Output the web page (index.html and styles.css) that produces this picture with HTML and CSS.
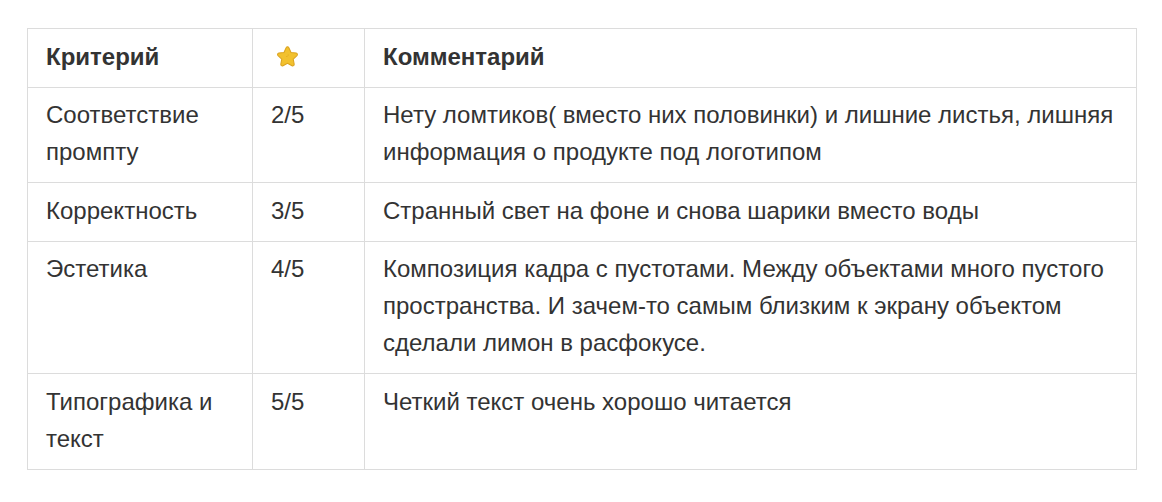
FILE: index.html
```html
<!DOCTYPE html>
<html lang="ru">
<head>
<meta charset="utf-8">
<link rel="stylesheet" href="styles.css">
</head>
<body>
<table class="grid">
  <colgroup>
    <col class="c1"><col class="c2"><col class="c3">
  </colgroup>
  <thead>
    <tr>
      <th>Критерий</th>
      <th><svg class="star" viewBox="0 0 24 24" width="25" height="25"><path d="M12 2.6c.6 0 1 .4 1.3 1l2.1 4.5 4.9.6c1.2.2 1.6 1.6.8 2.4l-3.6 3.4.9 4.9c.2 1.2-1 2.1-2.1 1.5L12 18.6l-4.3 2.3c-1.1.6-2.3-.3-2.1-1.5l.9-4.9-3.6-3.4c-.9-.8-.4-2.2.8-2.4l4.9-.6 2.1-4.5c.3-.6.7-1 1.3-1z" fill="#f2c12e" stroke="#dba31f" stroke-width="1"/><circle cx="12.6" cy="10.6" r=".5" fill="#d9a21c"/><circle cx="11.4" cy="12" r=".5" fill="#d9a21c"/></svg></th>
      <th>Комментарий</th>
    </tr>
  </thead>
  <tbody>
    <tr>
      <td>Соответствие промпту</td>
      <td>2/5</td>
      <td>Нету ломтиков( вместо них половинки) и лишние листья, лишняя информация о продукте под логотипом</td>
    </tr>
    <tr>
      <td>Корректность</td>
      <td>3/5</td>
      <td>Странный свет на фоне и снова шарики вместо воды</td>
    </tr>
    <tr>
      <td>Эстетика</td>
      <td>4/5</td>
      <td>Композиция кадра с пустотами. Между объектами много пустого пространства. И зачем-то самым близким к экрану объектом сделали лимон в расфокусе.</td>
    </tr>
    <tr>
      <td>Типографика и текст</td>
      <td>5/5</td>
      <td>Четкий текст очень хорошо читается</td>
    </tr>
  </tbody>
</table>
</body>
</html>
```
FILE: styles.css
```css
html, body {
  margin: 0;
  padding: 0;
  background: #ffffff;
}
body {
  padding: 28px 0 0 27px;
  font-family: "Liberation Sans", Arial, sans-serif;
  color: #333333;
}
.grid {
  border-collapse: collapse;
  width: 1109px;
  table-layout: fixed;
  font-size: 24px;
  line-height: 37px;
}
.c1 { width: 225px; }
.c2 { width: 112px; }
.c3 { width: 772px; }
.grid th, .grid td {
  border: 1px solid #dcdcdc;
  padding: 8.5px 18px 12px 18px;
  text-align: left;
  vertical-align: top;
}
.grid th {
  font-weight: 700;
}
.star {
  display: block;
  margin: 6px 0 0 4px;
}
```
